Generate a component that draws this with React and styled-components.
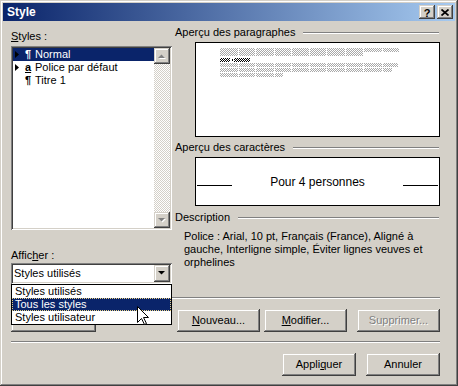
import React from 'react';
import styled, { createGlobalStyle } from 'styled-components';

const GlobalStyle = createGlobalStyle`
  html, body { margin: 0; padding: 0; background: #d4d0c8; }
  * { box-sizing: border-box; }
`;

const raised = `
  background: #d4d0c8;
  box-shadow: inset -1px -1px #404040, inset 1px 1px #d4d0c8,
    inset -2px -2px #808080, inset 2px 2px #ffffff;
`;

const sunken = `
  box-shadow: inset 1px 1px #808080, inset -1px -1px #ffffff,
    inset 2px 2px #404040, inset -2px -2px #d4d0c8;
`;

const Window = styled.div`
  position: relative;
  width: 458px;
  height: 386px;
  padding: 3px;
  display: flex;
  flex-direction: column;
  background: #d4d0c8;
  box-shadow: inset -1px -1px #404040, inset 1px 1px #d4d0c8,
    inset -2px -2px #808080, inset 2px 2px #ffffff;
  color: #000;
  font: 11px/13px 'Liberation Sans', Arial, sans-serif;
`;

const TitleBar = styled.div`
  height: 18px;
  display: flex;
  align-items: center;
  padding: 0 2px;
  background: linear-gradient(to right, #0a246a, #a6caf0);
`;

const Title = styled.div`
  flex: 1;
  padding-left: 2px;
  color: #fff;
  font-weight: bold;
  font-size: 12px;
`;

const TitleButton = styled.div`
  ${raised}
  width: 16px;
  height: 14px;
  margin-left: 2px;
  display: flex;
  align-items: center;
  justify-content: center;
  font-weight: bold;
  font-size: 11px;
  line-height: 14px;
  padding-top: 1px;
`;

const Body = styled.div`
  flex: 1;
  display: flex;
  flex-direction: column;
  padding: 0 15px 0 8px;
`;

const TopSection = styled.div`
  height: 276px;
  display: flex;
`;

const LeftCol = styled.div`
  width: 161px;
  display: flex;
  flex-direction: column;
`;

const Label = styled.div`
  height: 13px;
  margin-top: ${p => p.$top}px;
  white-space: nowrap;
`;

const Key = styled.span`
  text-decoration: underline;
`;

const ListBox = styled.div`
  ${sunken}
  margin-top: 3px;
  height: 184px;
  padding: 2px;
  background: #fff;
  display: flex;
`;

const Items = styled.div`
  flex: 1;
`;

const Row = styled.div`
  height: 13px;
  display: flex;
  align-items: center;
  padding-left: 2px;
  white-space: nowrap;
  background: ${p => (p.$selected ? '#0a246a' : 'transparent')};
  color: ${p => (p.$selected ? '#fff' : '#000')};
`;

const Marker = styled.span`
  width: 10px;
  display: flex;
  align-items: center;
`;

const StyleIcon = styled.span`
  width: 10px;
  font-weight: bold;
  text-decoration: ${p => (p.$char ? 'underline' : 'none')};
`;

const ScrollBar = styled.div`
  width: 16px;
  display: flex;
  flex-direction: column;
`;

const ScrollButton = styled.div`
  ${raised}
  width: 16px;
  height: ${p => p.$h || 16}px;
  display: flex;
  align-items: center;
  justify-content: center;
`;

const Track = styled.div`
  flex: 1;
  background-image: conic-gradient(#ffffff 25%, #d4d0c8 0 50%, #ffffff 0 75%, #d4d0c8 0);
  background-size: 2px 2px;
`;

const ComboWrap = styled.div`
  position: relative;
  margin-top: 1px;
  height: 21px;
`;

const ComboFrame = styled.div`
  ${sunken}
  height: 21px;
  padding: 2px;
  background: #fff;
  display: flex;
  align-items: center;
`;

const ComboText = styled.div`
  flex: 1;
  padding-left: 1px;
`;

const DropList = styled.div`
  position: absolute;
  top: 21px;
  left: 0;
  width: 161px;
  border: 1px solid #000;
  background: #fff;
  z-index: 5;
`;

const DropItem = styled.div`
  height: 13px;
  padding-left: 2px;
  line-height: 11px;
  white-space: nowrap;
  background: ${p => (p.$selected ? '#0a246a' : '#fff')};
  color: ${p => (p.$selected ? '#fff' : '#000')};
  border: 1px dotted ${p => (p.$selected ? '#e8d080' : 'transparent')};
`;

const Cursor = styled.svg`
  position: absolute;
  left: 125px;
  top: 21px;
`;

const RightCol = styled.div`
  flex: 1;
  margin-left: 3px;
  display: flex;
  flex-direction: column;
`;

const GroupHeader = styled.div`
  height: 13px;
  margin-top: ${p => p.$top}px;
  display: flex;
  align-items: center;
  white-space: nowrap;
  &::after {
    content: '';
    flex: 1;
    margin: 0 1px 0 8px;
    border-top: 1px solid #808080;
    border-bottom: 1px solid #ffffff;
  }
`;

const PreviewBox = styled.div`
  margin: 3px 0 0 20px;
  height: ${p => p.$h}px;
  border: 1px solid #000;
  background: #fff;
`;

const CharPreview = styled.div`
  height: 100%;
  display: flex;
  align-items: baseline;
  justify-content: space-between;
  padding: 16px 1px 0 1px;
  font: 12px/16px 'Liberation Sans', Arial, sans-serif;
`;

const Rule = styled.span`
  display: inline-block;
  width: 35px;
  height: 1px;
  background: #000;
`;

const Description = styled.div`
  margin: 6px 0 0 9px;
`;

const Separator = styled.div`
  height: 2px;
  margin-top: ${p => p.$top}px;
  border-top: 1px solid #808080;
  border-bottom: 1px solid #ffffff;
`;

const ButtonRow = styled.div`
  margin-top: 10px;
  height: 23px;
  display: flex;
  justify-content: ${p => p.$justify || 'flex-end'};
`;

const ButtonGroup = styled.div`
  display: flex;
`;

const Button = styled.div`
  ${raised}
  width: ${p => p.$w}px;
  height: 23px;
  margin-left: ${p => p.$gap || 0}px;
  display: flex;
  align-items: center;
  justify-content: center;
  white-space: nowrap;
  color: ${p => (p.$disabled ? '#808080' : '#000')};
  text-shadow: ${p => (p.$disabled ? '1px 1px #ffffff' : 'none')};
`;

const Arrow = ({ dir, color = '#000', disabled }) => {
  const pts = dir === 'up' ? '0,4 7,4 3.5,0.5' : '0,0 7,0 3.5,3.5';
  return (
    <svg width="8" height="5" viewBox="0 0 8 5">
      {disabled && <polygon points={pts} fill="#fff" transform="translate(1,1)" />}
      <polygon points={pts} fill={disabled ? '#808080' : color} />
    </svg>
  );
};

const Triangle = () => (
  <svg width="4" height="7" viewBox="0 0 4 7">
    <polygon points="0,0 4,3.5 0,7" fill="#000" />
  </svg>
);

// hatched placeholder words of the paragraph preview
const words = (x0, x1) => {
  const widths = [18, 16, 18, 16, 17, 16, 18, 17];
  const out = [];
  let x = x0;
  let i = 0;
  while (x < x1) {
    const w = Math.min(widths[i % widths.length], x1 - x);
    out.push([x, w]);
    x += w + 1;
    i += 1;
  }
  return out;
};

const previewLines = [
  { y: 5, end: 203 },
  { y: 9, end: 167 },
  { y: 20, end: 202 },
  { y: 25, end: 196 },
  { y: 30, end: 87 },
];

const ParagraphSketch = () => (
  <svg width="243" height="93" viewBox="0 0 243 93" shapeRendering="crispEdges">
    <defs>
      <pattern id="lite" width="2" height="2" patternUnits="userSpaceOnUse">
        <rect x="0" y="0" width="1" height="1" fill="#a8a8a8" />
        <rect x="1" y="1" width="1" height="1" fill="#a8a8a8" />
      </pattern>
      <pattern id="dark" width="2" height="2" patternUnits="userSpaceOnUse">
        <rect x="0" y="0" width="1" height="1" fill="#000" />
        <rect x="1" y="1" width="1" height="1" fill="#000" />
      </pattern>
    </defs>
    {previewLines.map(l =>
      words(24, l.end).map(([x, w]) => (
        <rect key={`${l.y}-${x}`} x={x} y={l.y} width={w} height="4" fill="url(#lite)" />
      ))
    )}
    <rect x="24" y="15" width="10" height="4" fill="url(#dark)" />
    <rect x="36" y="16" width="1" height="2" fill="#000" />
    <rect x="38" y="15" width="16" height="4" fill="url(#dark)" />
  </svg>
);

export default function App() {
  return (
    <>
      <GlobalStyle />
      <Window>
        <TitleBar>
          <Title>Style</Title>
          <TitleButton>?</TitleButton>
          <TitleButton>
            <svg width="8" height="7" viewBox="0 0 8 7">
              <path d="M0.5 0.5 L7.5 6.5 M7.5 0.5 L0.5 6.5" stroke="#000" strokeWidth="1.7" />
            </svg>
          </TitleButton>
        </TitleBar>

        <Body>
          <TopSection>
            <LeftCol>
              <Label $top={9}>
                <Key>S</Key>tyles :
              </Label>
              <ListBox>
                <Items>
                  <Row $selected>
                    <Marker><Triangle /></Marker>
                    <StyleIcon>¶</StyleIcon>
                    Normal
                  </Row>
                  <Row>
                    <Marker><Triangle /></Marker>
                    <StyleIcon $char>a</StyleIcon>
                    Police par défaut
                  </Row>
                  <Row>
                    <Marker />
                    <StyleIcon>¶</StyleIcon>
                    Titre 1
                  </Row>
                </Items>
                <ScrollBar>
                  <ScrollButton><Arrow dir="up" disabled /></ScrollButton>
                  <Track />
                  <ScrollButton><Arrow dir="down" disabled /></ScrollButton>
                </ScrollBar>
              </ListBox>

              <Label $top={19}>
                Affic<Key>h</Key>er :
              </Label>
              <ComboWrap>
                <ComboFrame>
                  <ComboText>Styles utilisés</ComboText>
                  <ScrollButton $h={17}><Arrow dir="down" /></ScrollButton>
                </ComboFrame>
                <DropList>
                  <DropItem>Styles utilisés</DropItem>
                  <DropItem $selected>Tous les styles</DropItem>
                  <DropItem>Styles utilisateur</DropItem>
                  <Cursor width="12" height="19" viewBox="0 0 12 19">
                    <path
                      d="M0.5 0.5 L0.5 16.5 L4.5 12.5 L7.5 18.5 L9.5 17.5 L6.5 11.5 L11.5 11.5 Z"
                      fill="#fff"
                      stroke="#000"
                      strokeWidth="1"
                    />
                  </Cursor>
                </DropList>
              </ComboWrap>
            </LeftCol>

            <RightCol>
              <GroupHeader $top={5}>Aperçu des paragraphes</GroupHeader>
              <PreviewBox $h={95}>
                <ParagraphSketch />
              </PreviewBox>

              <GroupHeader $top={4}>Aperçu des caractères</GroupHeader>
              <PreviewBox $h={49}>
                <CharPreview>
                  <Rule />
                  <span>Pour 4 personnes</span>
                  <Rule />
                </CharPreview>
              </PreviewBox>

              <GroupHeader $top={5}>Description</GroupHeader>
              <Description>
                Police : Arial, 10 pt, Français (France), Aligné à gauche, Interligne simple,
                Éviter lignes veuves et orphelines
              </Description>
            </RightCol>
          </TopSection>

          <Separator $top={0} />
          <ButtonRow $justify="space-between">
            {/* button hidden behind the open drop-down list */}
            <Button $w={85} />
            <ButtonGroup>
              <Button $w={83}><Key>N</Key>ouveau...</Button>
              <Button $w={83} $gap={4}><Key>M</Key>odifier...</Button>
              <Button $w={83} $gap={10} $disabled>Supprimer...</Button>
            </ButtonGroup>
          </ButtonRow>

          <Separator $top={9} />
          <ButtonRow>
            <Button $w={74}>Appli<Key>q</Key>uer</Button>
            <Button $w={74} $gap={10}>Annuler</Button>
          </ButtonRow>
        </Body>
      </Window>
    </>
  );
}
